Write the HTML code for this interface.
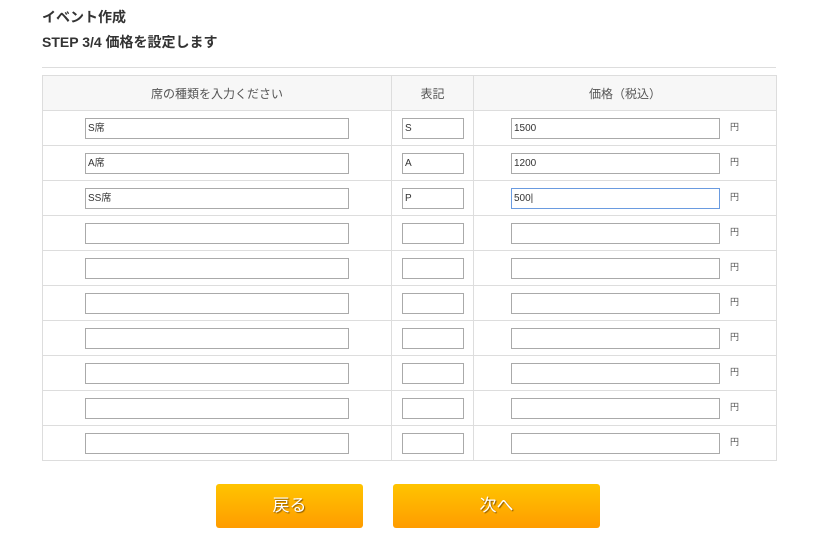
<!DOCTYPE html><html><head><meta charset="utf-8"><style>
body{margin:0;background:#fff;font-family:"Liberation Sans","Noto Sans CJK JP",sans-serif;color:#333;width:820px;height:537px;position:relative;overflow:hidden}
.t{position:absolute;left:42px;font-weight:bold;font-size:14px}
.hr{position:absolute;left:42px;top:67px;width:734px;height:1px;background:#ddd}
table{position:absolute;left:42px;top:75px;border-collapse:collapse;width:735px}
td,th{border:1px solid #ddd;height:34px;padding:0;position:relative}
th{background:#f7f7f7;font-weight:normal;font-size:12px;color:#555}
.i{position:absolute;top:7px;border:1px solid #aaa;box-sizing:border-box;height:21px;font-size:10px;line-height:19px;padding-left:2px;color:#333;background:#fff}
.y{position:absolute;left:256px;top:9px;font-size:9px;color:#555}
.b{position:absolute;top:484px;height:44px;border-radius:3px;background:linear-gradient(#ffc400,#ff9c00);color:#fff;font-size:17px;text-align:center;line-height:44px;text-shadow:1px 1px 1px #8a5a00}
</style></head><body>
<div class="t" style="top:7px">イベント作成</div>
<div class="t" style="top:32px">STEP 3/4 価格を設定します</div>
<div class="hr"></div>
<table>
<tr><th style="width:348px">席の種類を入力ください</th><th style="width:81px">表記</th><th>価格（税込）</th></tr>
<tr><td><div class="i" style="left:42px;width:264px">S席</div></td><td><div class="i" style="left:10px;width:62px">S</div></td><td><div class="i" style="left:37px;width:209px">1500</div><span class="y">円</span></td></tr>
<tr><td><div class="i" style="left:42px;width:264px">A席</div></td><td><div class="i" style="left:10px;width:62px">A</div></td><td><div class="i" style="left:37px;width:209px">1200</div><span class="y">円</span></td></tr>
<tr><td><div class="i" style="left:42px;width:264px">SS席</div></td><td><div class="i" style="left:10px;width:62px">P</div></td><td><div class="i" style="left:37px;width:209px;border-color:#6a9be0">500|</div><span class="y">円</span></td></tr>
<tr><td><div class="i" style="left:42px;width:264px"></div></td><td><div class="i" style="left:10px;width:62px"></div></td><td><div class="i" style="left:37px;width:209px"></div><span class="y">円</span></td></tr>
<tr><td><div class="i" style="left:42px;width:264px"></div></td><td><div class="i" style="left:10px;width:62px"></div></td><td><div class="i" style="left:37px;width:209px"></div><span class="y">円</span></td></tr>
<tr><td><div class="i" style="left:42px;width:264px"></div></td><td><div class="i" style="left:10px;width:62px"></div></td><td><div class="i" style="left:37px;width:209px"></div><span class="y">円</span></td></tr>
<tr><td><div class="i" style="left:42px;width:264px"></div></td><td><div class="i" style="left:10px;width:62px"></div></td><td><div class="i" style="left:37px;width:209px"></div><span class="y">円</span></td></tr>
<tr><td><div class="i" style="left:42px;width:264px"></div></td><td><div class="i" style="left:10px;width:62px"></div></td><td><div class="i" style="left:37px;width:209px"></div><span class="y">円</span></td></tr>
<tr><td><div class="i" style="left:42px;width:264px"></div></td><td><div class="i" style="left:10px;width:62px"></div></td><td><div class="i" style="left:37px;width:209px"></div><span class="y">円</span></td></tr>
<tr><td><div class="i" style="left:42px;width:264px"></div></td><td><div class="i" style="left:10px;width:62px"></div></td><td><div class="i" style="left:37px;width:209px"></div><span class="y">円</span></td></tr>
</table>
<div class="b" style="left:216px;width:147px">戻る</div>
<div class="b" style="left:393px;width:207px">次へ</div>
</body></html>
